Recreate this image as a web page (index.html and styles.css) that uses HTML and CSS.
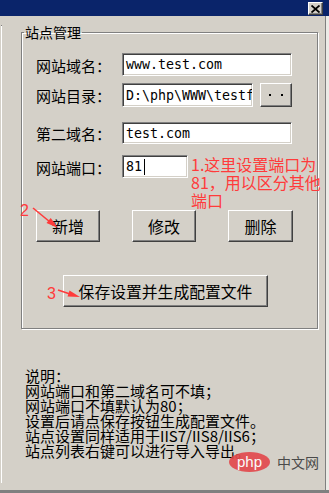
FILE: index.html
```html
<!DOCTYPE html>
<html lang="zh-CN">
<head>
    <meta charset="UTF-8">
    <meta name="viewport" content="width=device-width, initial-scale=1.0">
    <title>站点管理</title>
    <link rel="stylesheet" href="styles.css">
</head>
<body>
    <div class="window">
        <div class="titlebar">
            <div class="close-btn">
                <svg width="9" height="8" viewBox="0 0 9 8"><path d="M0.5 0.5 L8.5 7.5 M8.5 0.5 L0.5 7.5" stroke="#000" stroke-width="1.8" fill="none"/></svg>
            </div>
        </div>
        <div class="client">
            <div class="side"><div class="side-line"></div></div>
            <div class="main">
                <fieldset class="group">
                    <legend>站点管理</legend>
                    <div class="group-body">
                        <div class="row row-1">
                            <label class="label">网站域名：</label>
                            <div class="field field-wide">www.test.com</div>
                        </div>
                        <div class="row row-2">
                            <label class="label">网站目录：</label>
                            <div class="field field-dir">D:\php\WWW\testf</div>
                            <div class="btn btn-browse"><span class="dot"></span><span class="dot"></span></div>
                        </div>
                        <div class="row row-3">
                            <label class="label">第二域名：</label>
                            <div class="field field-wide">test.com</div>
                        </div>
                        <div class="row row-4">
                            <label class="label">网站端口：</label>
                            <div class="field field-port">81<span class="caret"></span></div>
                        </div>
                        <div class="actions">
                            <div class="btn btn-action">新增</div>
                            <div class="btn btn-action">修改</div>
                            <div class="btn btn-action">删除</div>
                        </div>
                        <div class="btn btn-save">保存设置并生成配置文件</div>
                    </div>
                </fieldset>
                <div class="notes">
                    <div>说明：</div>
                    <div>网站端口和第二域名可不填；</div>
                    <div>网站端口不填默认为80；</div>
                    <div>设置后请点保存按钮生成配置文件。</div>
                    <div>站点设置同样适用于IIS7/IIS8/IIS6；</div>
                    <div>站点列表右键可以进行导入导出。</div>
                </div>
            </div>
            <div class="edge"></div>
        </div>
    </div>

    <!-- 标注 -->
    <div class="note note-1">1.这里设置端口为<br>81，用以区分其他<br>端口</div>
    <div class="note note-2">2</div>
    <div class="note note-3">3</div>
    <svg class="arrows" width="329" height="493" viewBox="0 0 329 493">
        <path d="M33 208 L50 222" stroke="#ff3b3b" stroke-width="1.6" fill="none"/>
        <polygon points="58,228 46.5,223 50.7,218" fill="#ff3b3b"/>
        <path d="M58 290 L70 294" stroke="#ff3b3b" stroke-width="1.6" fill="none"/>
        <polygon points="80,297 67.5,296.5 69.5,290.5" fill="#ff3b3b"/>
    </svg>

    <div class="watermark">
        <span class="wm-php">php</span>
        <span class="wm-text">中文网</span>
    </div>
</body>
</html>
```

FILE: styles.css
```css
body {
    margin: 0;
    width: 329px;
    height: 493px;
    overflow: hidden;
    background: #d4d0c8;
    font-family: "Noto Sans CJK SC", "Liberation Sans", sans-serif;
    color: #000;
    position: relative;
}
.window {
    display: flex;
    flex-direction: column;
    height: 493px;
}
.titlebar {
    height: 16px;
    background: #0a246a;
    display: flex;
    justify-content: flex-end;
    padding-right: 6px;
    flex-shrink: 0;
}
.close-btn {
    width: 13px;
    height: 11px;
    margin-top: 2px;
    background: #d4d0c8;
    border-top: 1px solid #fff;
    border-left: 1px solid #fff;
    border-right: 1px solid #404040;
    border-bottom: 1px solid #404040;
    box-shadow: inset -1px -1px 0 #808080;
    display: flex;
    align-items: center;
    justify-content: center;
}
.client {
    flex: 1;
    display: flex;
    border-bottom: 3px solid #808080;
}
.side {
    width: 3px;
    flex-shrink: 0;
}
.side-line {
    margin-top: 9px;
    margin-left: 1px;
    width: 1px;
    height: 457px;
    background: #fff;
    border-top: 1px solid #808080;
}
.main {
    flex: 1;
    border-right: 1px solid #808080;
    position: relative;
}
.edge {
    width: 3px;
    background: #ecebe7;
}

/* group box */
.group {
    margin: 8px 0 0 18px;
    padding: 0;
    width: 295px;
    border: 1px solid #808080;
    box-shadow: inset 1px 1px 0 #fff, 1px 1px 0 #fff;
}
.group legend {
    margin-left: 2px;
    padding: 0 1px;
    font-size: 14px;
    line-height: 16px;
}
.group-body {
    padding: 13px 0 21px 14px;
}
.row {
    display: flex;
    align-items: center;
}
.row-1 { height: 23px; }
.row-2 { height: 24px; margin-top: 7px; }
.row-3 { height: 22px; margin-top: 15px; }
.row-4 { height: 23px; margin-top: 11px; }
.label {
    width: 86px;
    font-size: 15px;
    line-height: 16px;
    padding-top: 2px;
    flex-shrink: 0;
}
.field {
    height: 100%;
    box-sizing: border-box;
    background: #fff;
    border-top: 1px solid #808080;
    border-left: 1px solid #808080;
    border-right: 1px solid #fff;
    border-bottom: 1px solid #fff;
    box-shadow: inset 1px 1px 0 #404040, inset -1px -1px 0 #d4d0c8;
    padding-left: 3px;
    font-family: "DejaVu Sans Mono", "Liberation Mono", monospace;
    font-size: 13.3px;
    display: flex;
    align-items: center;
    white-space: nowrap;
    overflow: hidden;
}
.field-wide { width: 170px; }
.field-dir { width: 131px; }
.field-port { width: 66px; }
.caret {
    display: inline-block;
    width: 1px;
    height: 16px;
    background: #000;
    margin-left: 2px;
}

/* buttons */
.btn {
    box-sizing: border-box;
    background: #d4d0c8;
    border-top: 1px solid #fff;
    border-left: 1px solid #fff;
    border-right: 1px solid #404040;
    border-bottom: 1px solid #404040;
    box-shadow: inset -1px -1px 0 #808080;
    display: flex;
    align-items: center;
    justify-content: center;
    font-size: 16px;
}
.btn-browse {
    width: 32px;
    height: 24px;
    margin-left: 7px;
    gap: 10px;
}
.dot {
    width: 2px;
    height: 2px;
    background: #000;
}
.actions {
    display: flex;
    gap: 32px;
    margin-top: 32px;
}
.btn-action {
    width: 64px;
    height: 32px;
}
.btn-action:last-child {
    width: 65px;
}
.btn-save {
    width: 205px;
    height: 32px;
    margin: 33px 0 0 27px;
    font-size: 15.8px;
}

/* notes */
.notes {
    margin: 39px 0 0 22px;
    font-size: 15px;
    line-height: 15px;
    white-space: nowrap;
}

/* annotations */
.note {
    position: absolute;
    color: #ff3b3b;
    font-size: 16px;
    line-height: 18px;
}
.note-1 {
    left: 191px;
    top: 155px;
}
.note-2 {
    left: 20px;
    top: 202px;
    font-family: "Liberation Sans", sans-serif;
}
.note-3 {
    left: 47px;
    top: 285px;
    font-family: "Liberation Sans", sans-serif;
}
.arrows {
    position: absolute;
    left: 0;
    top: 0;
    pointer-events: none;
}
.watermark {
    position: absolute;
    left: 229px;
    top: 452px;
    display: flex;
    align-items: center;
    gap: 7px;
}
.wm-php {
    width: 41px;
    height: 20px;
    border-radius: 50%;
    background: #e3474b;
    color: #fff;
    font-family: "Liberation Sans", sans-serif;
    font-size: 15px;
    line-height: 19px;
    text-align: center;
    opacity: 0.9;
}
.wm-text {
    color: #4a4a4a;
    font-size: 14px;
    line-height: 20px;
}
```
